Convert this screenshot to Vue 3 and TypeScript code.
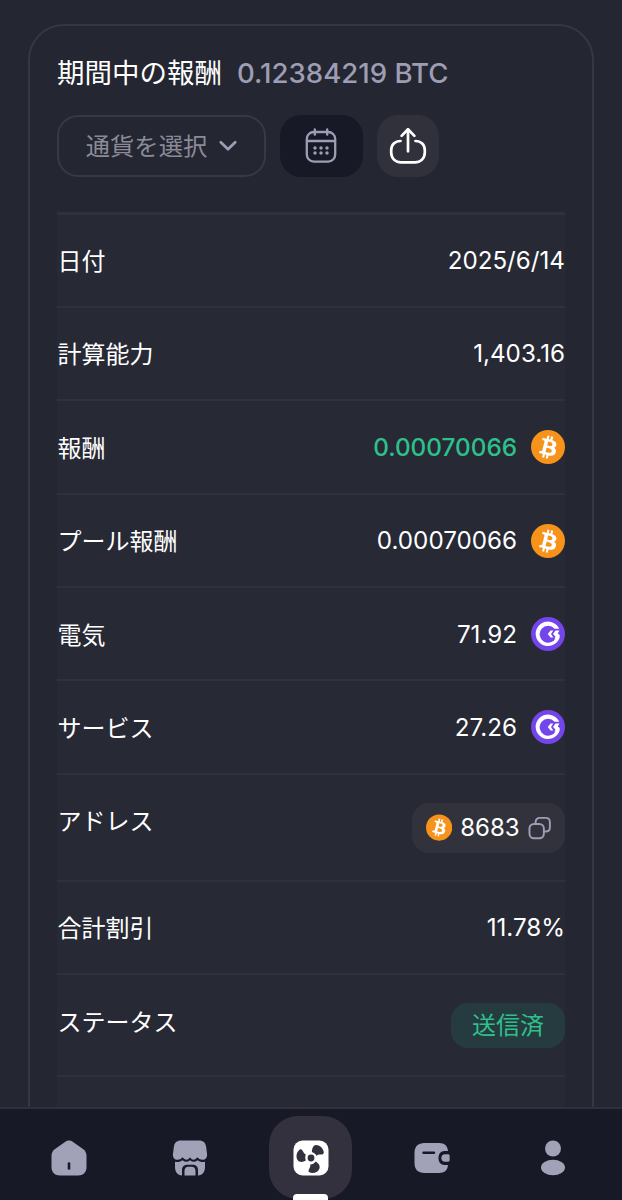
<script setup lang="ts">
type Kind = 'plain' | 'btc' | 'gmt' | 'address' | 'status'

interface Row {
  label: string
  value: string
  kind: Kind
  tone?: string
  size?: string
}

const rows: Row[] = [
  { label: '日付', value: '2025/6/14', kind: 'plain' },
  { label: '計算能力', value: '1,403.16', kind: 'plain' },
  { label: '報酬', value: '0.00070066', kind: 'btc', tone: 'green' },
  { label: 'プール報酬', value: '0.00070066', kind: 'btc' },
  { label: '電気', value: '71.92', kind: 'gmt' },
  { label: 'サービス', value: '27.26', kind: 'gmt' },
  { label: 'アドレス', value: '8683', kind: 'address', size: 'tall' },
  { label: '合計割引', value: '11.78%', kind: 'plain' },
  { label: 'ステータス', value: '送信済', kind: 'status', size: 'medium' },
]

const btcPath =
  'M23.189 14.02c.314-2.096-1.283-3.223-3.465-3.975l.708-2.84-1.728-.43-.69 2.765c-.454-.114-.92-.22-1.385-.326l.695-2.783L15.596 6l-.708 2.839c-.376-.086-.746-.17-1.104-.26l.002-.009-2.384-.595-.46 1.846s1.283.294 1.256.312c.7.175.826.638.805 1.006l-.806 3.235c.048.012.11.03.18.057l-.183-.045-1.13 4.532c-.086.212-.303.531-.793.41.018.025-1.256-.313-1.256-.313l-.858 1.978 2.25.561c.418.105.828.215 1.231.318l-.715 2.872 1.727.43.708-2.84c.472.127.93.245 1.378.357l-.706 2.828 1.728.43.715-2.866c2.948.558 5.164.333 6.097-2.333.752-2.146-.037-3.385-1.588-4.192 1.13-.26 1.98-1.003 2.207-2.538zm-3.95 5.538c-.533 2.147-4.148.986-5.32.695l.95-3.805c1.172.293 4.929.872 4.37 3.11zm.535-5.569c-.487 1.953-3.495.96-4.47.717l.86-3.45c.975.243 4.118.696 3.61 2.733z'
</script>

<template>
  <div class="screen">
    <main class="content">
      <section class="card">
        <header class="heading">
          <h1 class="title">期間中の報酬</h1>
          <span class="total">0.12384219 BTC</span>
        </header>

        <div class="toolbar">
          <button class="select" type="button">
            <span>通貨を選択</span>
            <svg class="chevron" viewBox="0 0 18 12" aria-hidden="true">
              <path d="M1.8 2.2 9 9.3l7.2-7.1" />
            </svg>
          </button>
          <button class="calendar" type="button" aria-label="カレンダー">
            <svg viewBox="0 0 32 36" aria-hidden="true">
              <rect x="1.8" y="4" width="28.4" height="29.6" rx="7" />
              <path d="M2 13h28M9.800 1.500v5.200M22.200 1.500v5.200" />
              <g class="dots">
                <circle cx="10" cy="20" r="1.750" /><circle cx="16" cy="20" r="1.750" /><circle cx="22" cy="20" r="1.750" />
                <circle cx="10" cy="25.100" r="1.750" /><circle cx="16" cy="25.100" r="1.750" /><circle cx="22" cy="25.100" r="1.750" />
              </g>
            </svg>
          </button>
          <button class="share" type="button" aria-label="共有">
            <svg viewBox="0 0 38 38" aria-hidden="true">
              <path d="M11.500 14C6 14 2.200 17.800 2.200 23.200v2.400c0 5.700 4 9.700 9.800 9.700h14c5.800 0 9.800-4 9.800-9.700v-2.400c0-5.400-3.800-9.200-9.300-9.200" />
              <path d="M19 24.300V3M12.600 8.900 19 2.300l6.400 6.600" />
            </svg>
          </button>
        </div>

        <div class="table">
          <div v-for="row in rows" :key="row.label" class="row" :class="row.size">
            <span class="label">{{ row.label }}</span>
            <div v-if="row.kind === 'address'" class="address">
              <svg class="coin small" viewBox="0 0 32 32" aria-hidden="true">
                <circle cx="16" cy="16" r="16" fill="#f7931a" />
                <path :d="btcPath" fill="#fff" transform="translate(-1.6 -1.5) scale(1.1)" />
              </svg>
              <span>{{ row.value }}</span>
              <svg class="copy" viewBox="0 0 24 24" aria-hidden="true">
                <rect x="1.500" y="7.800" width="14.800" height="14.800" rx="4.600" />
                <path d="M7.800 7.500V6c0-2.700 1.800-4.400 4.500-4.400h5.800c2.700 0 4.400 1.700 4.400 4.400v5.200c0 2.700-1.700 4.400-4.400 4.400h-1.600" />
              </svg>
            </div>
            <span v-else-if="row.kind === 'status'" class="status">{{ row.value }}</span>
            <div v-else class="value" :class="row.tone">
              <span>{{ row.value }}</span>
              <svg v-if="row.kind === 'btc'" class="coin" viewBox="0 0 32 32" aria-hidden="true">
                <circle cx="16" cy="16" r="16" fill="#f7931a" />
                <path :d="btcPath" fill="#fff" transform="translate(-1.6 -1.5) scale(1.1)" />
              </svg>
              <svg v-if="row.kind === 'gmt'" class="coin" viewBox="0 0 34 34" aria-hidden="true">
                <circle cx="17" cy="17" r="17" fill="#7445ea" />
                <path d="M28.200 11.700h-4.600A8.500 8.500 0 1 0 25 20.500h3.700A12.300 12.300 0 1 1 27.700 10.800z" fill="#fff" />
                <path d="M22.300 13.500h-2.700L16.800 17l2.800 3.600h2.700L20 17zM28.500 13.500h-4L22 17l2.400 2.500-.8 2.300h3.800c1.600-1.400 1.900-3.300.8-4.300L26.700 16.500z" fill="#fff" />
              </svg>
            </div>
          </div>
        </div>
      </section>
    </main>

    <nav class="nav">
      <a class="tab">
        <svg viewBox="0 0 36 36" aria-hidden="true">
          <path d="M14 1.900c2.600-1.800 5.400-1.800 8 0l10 7.200c2.200 1.600 3.500 3.900 3.500 6.600V27c0 5.300-3.200 8.500-8.500 8.500H9C3.700 35.500.5 32.300.5 27V15.700c0-2.700 1.300-5 3.500-6.600z" />
          <path class="cut" d="M18 23.500v5" />
        </svg>
      </a>
      <a class="tab">
        <svg viewBox="0 0 36 36" aria-hidden="true">
          <path d="M9 .5h18c4.400 0 6.500 2.200 7.100 6.300l.9 6.700c.6 4.200-1.600 6.300-4.500 6.300-2.100 0-3.700-.8-5-2.500-1.400 1.600-2.700 2.500-4 2.500-1.400 0-2.600-.9-3.500-2.500-1 1.600-2.100 2.500-3.500 2.500-1.400 0-2.700-.9-4-2.500-1.300 1.700-2.900 2.500-5 2.500C2.600 19.800.4 17.700 1 13.500l.9-6.700C2.500 2.700 4.600.5 9 .5z" />
          <path d="M3 21.700c2.800.7 5.300.1 7.500-1.500 2.500 2 5 2.100 7.500 0 2.500 2.100 5 2 7.500 0 2.200 1.600 4.700 2.200 7.500 1.500V27c0 5-2.400 8-7 8.500V30c0-3.500-2.300-5.300-5.500-5.300h-5C12.300 24.700 10 26.500 10 30v5.500C5.400 35 3 32 3 27z" />
          <path d="M12.500 35.500V31c0-2.800 1.500-4.300 4-4.300h3c2.500 0 4 1.500 4 4.300v4.500z" />
        </svg>
      </a>
      <a class="tab active">
        <svg viewBox="0 0 36 36" aria-hidden="true">
          <rect x=".5" y=".5" width="35" height="35" rx="9" />
          <circle class="blade" cx="18" cy="18" r="3.400" />
          <path class="blade" d="M18.900 12.100C19 8 20.500 5.200 23 5.100c4.300-.1 7.700 4.100 7.800 7.600 0 1.400-1.500 1.800-3.600 1.800-1.900 0-2.700.3-3.600 1.300-1-1.700-2.600-3-4.700-3.700z" />
          <path class="blade" d="M12.900 20.600c-2.900 1.800-6.200 2-7.900 0-2.800-3.300-1.300-9 1.800-11.100 1.400-.9 2.400.1 3.400 2.200.8 1.700 1.500 2.300 2.600 2.600-.8 2-.7 4.300.1 6.300z" />
          <path class="blade" d="M22.600 21.600c3 1.600 4.700 4.400 3.900 6.800-1.400 4.200-6.900 5.400-10.100 3.900-1.400-.7-1-2.100.1-4.100.9-1.700 1.100-2.600.6-3.700 2.300.1 4.200-.9 5.500-2.900z" />
        </svg>
        <i class="marker"></i>
      </a>
      <a class="tab">
        <svg viewBox="0 0 36 36" aria-hidden="true">
          <path d="M10.500 3H25c5.800 0 8.500 2.800 9 8h-3.500c-4 0-6 3-6 7s2 7 6 7H34c-.5 5.200-3.200 8-9 8H10.500C4 33 .5 29.500.5 23V13C.5 6.500 4 3 10.500 3z" />
          <path d="M31 14.300h3c1.100 0 1.600.5 1.600 1.600v4.200c0 1.100-.5 1.600-1.600 1.600h-3c-2.200 0-3.700-1.500-3.700-3.700s1.500-3.700 3.700-3.700z" />
          <path class="cut wide" d="M9.500 12.700h10.500" />
        </svg>
      </a>
      <a class="tab">
        <svg viewBox="0 0 36 36" aria-hidden="true">
          <circle cx="18" cy="8.500" r="8" />
          <ellipse cx="18" cy="27.500" rx="12" ry="7.700" />
        </svg>
      </a>
    </nav>
  </div>
</template>

<style>
body {
  background: #242632;
  overflow: hidden;
}
</style>

<style scoped>
.screen {
  box-sizing: border-box;
  width: 622px;
  height: 1200px;
  display: flex;
  flex-direction: column;
  overflow: hidden;
  background: #242632;
  color: #fff;
  font-family: Inter, 'Noto Sans CJK JP', sans-serif;
}
.content {
  height: 1107px;
  flex: none;
  box-sizing: border-box;
  padding: 23.5px 28px 0;
  overflow: hidden;
}
.card {
  box-sizing: border-box;
  height: 1200px;
  border: 2px solid #353742;
  border-radius: 36px;
  padding: 28px 27px 0;
}
.heading {
  display: flex;
  align-items: center;
  gap: 15px;
  height: 38px;
  white-space: nowrap;
}
.title {
  margin: 0;
  font-size: 27.5px;
  font-weight: 400;
  line-height: 38px;
}
.total {
  color: #9d9db3;
  font-size: 27.6px;
  font-weight: 500;
  line-height: 38px;
}
.toolbar {
  display: flex;
  gap: 14px;
  margin-top: 23px;
}
button {
  box-sizing: border-box;
  height: 62px;
  margin: 0;
  padding: 0;
  border: 0;
  display: flex;
  align-items: center;
  justify-content: center;
  border-radius: 21px;
  font: inherit;
}
.select {
  width: 209px;
  gap: 12px;
  border: 2px solid #373944;
  background: none;
  color: #8b8b98;
  font-size: 24.3px;
}
.select span {
  padding-bottom: 3px;
}
.chevron {
  width: 18px;
  height: 12px;
  margin-top: 1px;
  fill: none;
  stroke: #9d9db3;
  stroke-width: 2.7;
  stroke-linecap: round;
  stroke-linejoin: round;
}
.calendar {
  width: 83px;
  background: #171927;
}
.calendar svg {
  width: 32px;
  height: 36px;
  margin-right: 1px;
  fill: none;
  stroke: #9d9db3;
  stroke-width: 2.3;
  stroke-linecap: round;
}
.calendar .dots {
  fill: #9d9db3;
  stroke: none;
}
.share {
  width: 62px;
  background: #31313c;
}
.share svg {
  width: 38px;
  height: 38px;
  fill: none;
  stroke: #fff;
  stroke-width: 2.7;
  stroke-linecap: round;
  stroke-linejoin: round;
}
.table {
  margin-top: 35px;
  width: 508px;
  height: 1000px;
  border-top: 3px solid #2f313c;
  background: #272935;
}
.row {
  box-sizing: border-box;
  display: flex;
  align-items: flex-start;
  justify-content: space-between;
  height: 93.4px;
  padding-top: 28px;
  border-bottom: 2px solid #2f313c;
}
.row.tall {
  height: 107px;
}
.row.medium {
  height: 102px;
}
.label {
  padding: 1.5px 0 0 0.5px;
  font-size: 24px;
  line-height: 36px;
}
.value {
  display: flex;
  align-items: center;
  gap: 14px;
  height: 36px;
  font-size: 24.2px;
}
.green {
  color: #2ec08b;
  font-weight: 500;
  font-size: 24.3px;
}
.coin {
  width: 34px;
  height: 34px;
}
.coin.small {
  width: 27px;
  height: 27px;
}
.address {
  box-sizing: border-box;
  width: 153px;
  height: 50px;
  padding: 0 14px;
  display: flex;
  align-items: center;
  gap: 8px;
  border-radius: 17px;
  background: #32323d;
  font-size: 24px;
}
.copy {
  width: 24px;
  height: 24px;
  fill: none;
  stroke: #9d9db3;
  stroke-width: 2;
  stroke-linecap: round;
}
.status {
  width: 114px;
  height: 45px;
  border-radius: 17px;
  background: #263b40;
  color: #2ec08b;
  font-size: 24px;
  line-height: 46px;
  text-align: center;
}
.nav {
  box-sizing: border-box;
  flex: 1;
  display: flex;
  padding: 7px 9px 0 8px;
  border-top: 2px solid #2f303c;
  background: #171927;
}
.tab {
  flex: 1;
  height: 83px;
  display: flex;
  align-items: center;
  justify-content: center;
}
.tab svg {
  width: 36px;
  height: 36px;
  fill: #a1a1b7;
}
.cut {
  fill: none;
  stroke: #171927;
  stroke-width: 2.6;
  stroke-linecap: round;
}
.cut.wide {
  stroke-width: 2.4;
}
.tab.active {
  position: relative;
  flex: none;
  width: 83px;
  margin: 0 19px;
  border-radius: 29px;
  background: #32313d;
}
.tab.active svg {
  fill: #fff;
}
.tab.active .blade {
  fill: #32313d;
}
.marker {
  position: absolute;
  left: 24px;
  bottom: -1px;
  width: 35px;
  height: 6px;
  border-radius: 4px 4px 0 0;
  background: #fff;
}
</style>
